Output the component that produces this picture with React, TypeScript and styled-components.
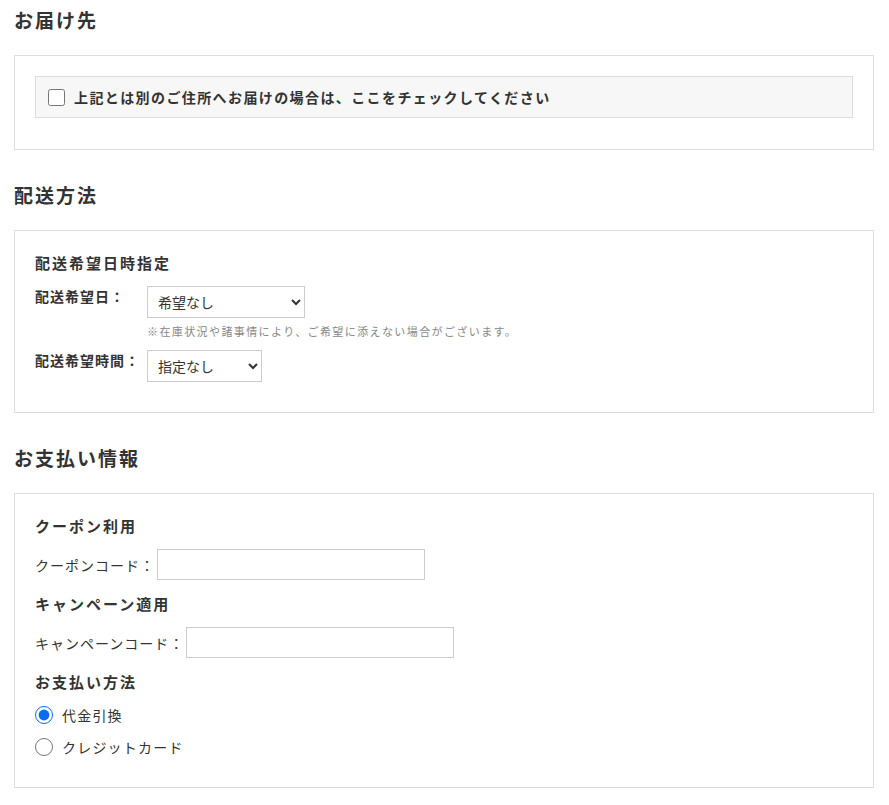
import * as React from "react";
import styled, { createGlobalStyle } from "styled-components";

const GlobalStyle = createGlobalStyle`
  html, body {
    margin: 0;
    padding: 0;
    background: #fff;
  }
  body {
    font-family: "Noto Sans CJK JP", "Noto Sans", sans-serif;
    color: #333;
  }
`;

const Page = styled.div`
  width: 860px;
  padding: 6px 0 0 14px;
`;

const Section = styled.section`
  & + & {
    margin-top: 31px;
  }
`;

const SectionTitle = styled.h2`
  margin: 0 0 21px;
  font-size: 19px;
  line-height: 28px;
  font-weight: 700;
  letter-spacing: 2px;
  color: #333;
`;

const Panel = styled.div<{ $bottom?: number }>`
  border: 1px solid #ddd;
  padding: 20px 20px ${(p) => p.$bottom ?? 30}px;
`;

const CheckBar = styled.label`
  display: flex;
  align-items: center;
  gap: 9px;
  height: 40px;
  padding: 0 12px;
  background: #f7f7f7;
  border: 1px solid #ddd;
  font-size: 14px;
  font-weight: 700;
  letter-spacing: 1.4px;
  cursor: pointer;

  input {
    width: 17px;
    height: 17px;
    margin: 0;
  }
`;

const SubTitle = styled.h3`
  margin: 0 0 11px;
  font-size: 15px;
  line-height: 24px;
  font-weight: 700;
  letter-spacing: 2px;
`;

const FieldRow = styled.div`
  display: flex;
  align-items: flex-start;

  & + & {
    margin-top: 10px;
  }
`;

const FieldLabel = styled.span`
  width: 112px;
  flex-shrink: 0;
  font-size: 14px;
  font-weight: 700;
  line-height: 20px;
  letter-spacing: 1px;
`;

const FieldBody = styled.div`
  display: flex;
  flex-direction: column;
`;

const Select = styled.select<{ $width: number }>`
  width: ${(p) => p.$width}px;
  height: 32px;
  padding: 0 6px;
  border: 1px solid #ccc;
  border-radius: 0;
  background: #fff;
  font-family: inherit;
  font-size: 14px;
  color: #333;
`;

const Note = styled.p`
  margin: 4px 0 0;
  font-size: 11px;
  line-height: 18px;
  letter-spacing: 1.4px;
  color: #888;
`;

const CodeRow = styled.div`
  display: flex;
  align-items: center;
  gap: 2px;
  margin-bottom: 12px;
  font-size: 14px;
  letter-spacing: 1px;
`;

const TextInput = styled.input`
  width: 268px;
  height: 31px;
  box-sizing: border-box;
  border: 1px solid #ccc;
  border-radius: 0;
  padding: 0 6px;
  font-family: inherit;
  font-size: 14px;
`;

const RadioList = styled.div`
  display: flex;
  flex-direction: column;
  gap: 12px;
`;

const RadioOption = styled.label`
  display: flex;
  align-items: center;
  gap: 9px;
  height: 20px;
  font-size: 14px;
  letter-spacing: 1.2px;
  cursor: pointer;

  input {
    width: 18px;
    height: 18px;
    margin: 0;
    accent-color: #0b6cf0;
  }
`;

const App = () => {
  const [pay, setPay] = React.useState("cod");

  return (
    <>
      <GlobalStyle />
      <Page>
        <Section>
          <SectionTitle>お届け先</SectionTitle>
          <Panel $bottom={31}>
            <CheckBar>
              <input type="checkbox" />
              上記とは別のご住所へお届けの場合は、ここをチェックしてください
            </CheckBar>
          </Panel>
        </Section>

        <Section>
          <SectionTitle>配送方法</SectionTitle>
          <Panel>
            <SubTitle>配送希望日時指定</SubTitle>
            <FieldRow>
              <FieldLabel>配送希望日：</FieldLabel>
              <FieldBody>
                <Select $width={158} defaultValue="none">
                  <option value="none">希望なし</option>
                </Select>
                <Note>※在庫状況や諸事情により、ご希望に添えない場合がございます。</Note>
              </FieldBody>
            </FieldRow>
            <FieldRow>
              <FieldLabel>配送希望時間：</FieldLabel>
              <FieldBody>
                <Select $width={115} defaultValue="none">
                  <option value="none">指定なし</option>
                </Select>
              </FieldBody>
            </FieldRow>
          </Panel>
        </Section>

        <Section>
          <SectionTitle>お支払い情報</SectionTitle>
          <Panel>
            <SubTitle>クーポン利用</SubTitle>
            <CodeRow>
              クーポンコード：
              <TextInput type="text" />
            </CodeRow>
            <SubTitle>キャンペーン適用</SubTitle>
            <CodeRow>
              キャンペーンコード：
              <TextInput type="text" />
            </CodeRow>
            <SubTitle>お支払い方法</SubTitle>
            <RadioList>
              <RadioOption>
                <input
                  type="radio"
                  name="pay"
                  checked={pay === "cod"}
                  onChange={() => setPay("cod")}
                />
                代金引換
              </RadioOption>
              <RadioOption>
                <input
                  type="radio"
                  name="pay"
                  checked={pay === "card"}
                  onChange={() => setPay("card")}
                />
                クレジットカード
              </RadioOption>
            </RadioList>
          </Panel>
        </Section>
      </Page>
    </>
  );
};

export default App;
